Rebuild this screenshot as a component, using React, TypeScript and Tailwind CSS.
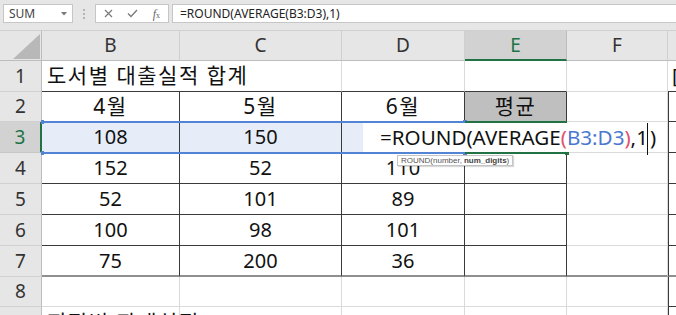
import React from "react";

const base =
  "flex items-center justify-center overflow-hidden whitespace-nowrap text-[20px] text-[#111]";

function C({ cls = "", children }: { cls?: string; children?: React.ReactNode }) {
  return <div className={`${base} ${cls}`}>{children}</div>;
}

function RH({ n, sel = false }: { n: string; sel?: boolean }) {
  return (
    <div
      className={
        sel
          ? "flex items-center justify-center bg-[#d2d2d2] text-[#217346] text-[19px] border-b border-[#c6c6c6] border-r-2 border-r-[#217346]"
          : "flex items-center justify-center bg-[#e6e6e6] text-[#333] text-[19px] border-b border-[#d0d0d0] border-r border-r-[#bdbdbd]"
      }
    >
      {n}
    </div>
  );
}

function CH({ l, sel = false }: { l: string; sel?: boolean }) {
  return (
    <div
      className={
        sel
          ? "flex items-center justify-center bg-[#d2d2d2] text-[#217346] text-[19px] border-r border-[#bdbdbd] border-b-2 border-b-[#217346] border-t border-t-[#d0d0d0]"
          : "flex items-center justify-center bg-[#e6e6e6] text-[#333] text-[19px] border-r border-[#cfcfcf] border-b border-b-[#bdbdbd] border-t border-t-[#d0d0d0]"
      }
    >
      {l}
    </div>
  );
}

const L = "border-r border-b border-[#dadada]"; // light grid
const D = "border-r border-b border-[#3a3a3a]"; // dark both
const LR_DB = "border-r border-r-[#dadada] border-b border-b-[#3a3a3a]";
const DR_GB = "border-r border-r-[#3a3a3a] border-b-2 border-b-[#8f8f8f]";
const LR_GB = "border-r border-r-[#dadada] border-b-2 border-b-[#8f8f8f]";
const KO = "font-['Noto_Sans','Noto_Sans_CJK_KR',sans-serif] tracking-[1.5px] text-[21px]";

export default function App() {
  return (
    <div className="relative w-[676px] h-[315px] overflow-hidden bg-[#e6e6e6] font-['Noto_Sans','Noto_Sans_CJK_KR',sans-serif]">
      {/* Formula bar */}
      <div className="flex h-[30px] pt-[4px] pl-[3px]">
        <div className="relative flex items-center w-[70px] h-[19px] bg-white border border-[#c6c6c6] pl-[5px] text-[12px] text-[#444]">
          SUM
          <svg className="absolute right-[5px] top-[7px]" width="6" height="4" viewBox="0 0 6 4">
            <path d="M0 0 L6 0 L3 3.5 Z" fill="#7a7a7a" />
          </svg>
        </div>
        <div className="flex w-[22px] h-[19px] items-center justify-center">
          <div className="flex flex-col gap-[2px]">
            <div className="w-[2px] h-[2px] bg-[#b5b5b5]" />
            <div className="w-[2px] h-[2px] bg-[#b5b5b5]" />
            <div className="w-[2px] h-[2px] bg-[#b5b5b5]" />
          </div>
        </div>
        <div className="flex items-center w-[74px] h-[19px] bg-white border border-[#c6c6c6] text-[#7a7a7a]">
          <div className="flex w-[25px] justify-center">
            <svg width="9" height="9" viewBox="0 0 9 9">
              <path d="M1 1 L8 8 M8 1 L1 8" stroke="#7a7a7a" strokeWidth="1.2" />
            </svg>
          </div>
          <div className="flex w-[25px] justify-center">
            <svg width="11" height="9" viewBox="0 0 11 9">
              <path d="M1 4.5 L4 7.5 L10 1" stroke="#7a7a7a" strokeWidth="1.4" fill="none" />
            </svg>
          </div>
          <div className="flex w-[24px] justify-center items-end font-['Liberation_Serif',serif] italic text-[12px] leading-none text-[#666]">
            f<span className="text-[8px] not-italic">x</span>
          </div>
        </div>
        <div className="flex items-center flex-1 ml-[3px] h-[19px] bg-white border border-[#c6c6c6] border-r-0 pl-[7px] text-[12px] text-[#222]">
          =ROUND(AVERAGE(B3:D3),1)
        </div>
      </div>

      {/* Sheet */}
      <div className="relative grid grid-cols-[42px_138px_162px_123px_102px_101px_40px] grid-rows-[31px_31px_30px_31px_31px_31px_31px_31px_30px_31px] bg-white">
        {/* header row */}
        <div className="relative bg-[#e6e6e6] border-r border-[#bdbdbd] border-b border-b-[#bdbdbd] border-t border-t-[#d0d0d0]">
          <svg className="absolute left-[13px] top-[3px]" width="27" height="25" viewBox="0 0 27 25">
            <path d="M27 0 L27 25 L0 25 Z" fill="#b8b8b8" />
          </svg>
        </div>
        <CH l="B" />
        <CH l="C" />
        <CH l="D" />
        <CH l="E" sel />
        <CH l="F" />
        <CH l="" />

        {/* row 1 */}
        <RH n="1" />
        <C cls={`border-b border-[#3a3a3a] justify-start pl-[5px] overflow-visible z-10 ${KO}`}>
          도서별 대출실적 합계
        </C>
        <C cls={LR_DB} />
        <C cls={LR_DB} />
        <C cls={LR_DB} />
        <C cls={L} />
        <C cls="border-b border-[#3a3a3a] justify-start pl-[4px] text-[#1b1b3a]">[</C>

        {/* row 2 */}
        <RH n="2" />
        <C cls={`${D} ${KO}`}>4월</C>
        <C cls={`${D} ${KO}`}>5월</C>
        <C cls={`${D} ${KO}`}>6월</C>
        <C cls={`${D} ${KO} bg-[#bfbfbf]`}>평균</C>
        <C cls={L} />
        <C cls="border-l border-b border-[#3a3a3a]" />

        {/* row 3 */}
        <RH n="3" sel />
        <C cls={`${D} bg-[#e6edf8]`}>108</C>
        <C cls={`${D} bg-[#e6edf8]`}>150</C>
        <C cls={`${D} bg-[#e6edf8]`} />
        <C cls={D} />
        <C cls={L} />
        <C cls="border-l border-b border-[#3a3a3a]" />

        {/* row 4 */}
        <RH n="4" />
        <C cls={D}>152</C>
        <C cls={D}>52</C>
        <C cls={D}>110</C>
        <C cls={D} />
        <C cls={L} />
        <C cls="border-l border-b border-[#3a3a3a]" />

        {/* row 5 */}
        <RH n="5" />
        <C cls={D}>52</C>
        <C cls={D}>101</C>
        <C cls={D}>89</C>
        <C cls={D} />
        <C cls={L} />
        <C cls="border-l border-b border-[#3a3a3a]" />

        {/* row 6 */}
        <RH n="6" />
        <C cls={D}>100</C>
        <C cls={D}>98</C>
        <C cls={D}>101</C>
        <C cls={D} />
        <C cls={L} />
        <C cls="border-l border-b border-[#3a3a3a]" />

        {/* row 7 */}
        <RH n="7" />
        <C cls={DR_GB}>75</C>
        <C cls={DR_GB}>200</C>
        <C cls={DR_GB}>36</C>
        <C cls={DR_GB} />
        <C cls={LR_GB} />
        <C cls="border-l border-l-[#3a3a3a] border-b-2 border-b-[#8f8f8f]" />

        {/* row 8 */}
        <RH n="8" />
        <C cls={L} />
        <C cls={L} />
        <C cls={L} />
        <C cls={L} />
        <C cls={L} />
        <C cls="border-l border-b border-[#3a3a3a]" />

        {/* row 9 */}
        <div className="bg-[#e6e6e6] border-r border-r-[#bdbdbd]" />
        <C cls={`${L} justify-start items-start pl-[5px] pt-0 overflow-visible z-10 ${KO}`}>
          지점별 판매실적
        </C>
        <C cls={L} />
        <C cls={L} />
        <C cls={L} />
        <C cls={L} />
        <C cls="border-l border-[#3a3a3a]" />

        {/* overlays: reference range B3:D3 */}
        <div className="absolute left-[42px] top-[91px] w-[423px] h-[2px] bg-[#5283d4]" />
        <div className="absolute left-[42px] top-[122px] w-[423px] h-[2px] bg-[#5283d4]" />
        <div className="absolute left-[463px] top-[90px] w-[4px] h-[4px] bg-[#5283d4]" />
        <div className="absolute left-[463px] top-[121px] w-[4px] h-[4px] bg-[#5283d4]" />
        <div className="absolute left-[41px] top-[90px] w-[3px] h-[4px] bg-[#5283d4]" />
        <div className="absolute left-[41px] top-[121px] w-[3px] h-[4px] bg-[#5283d4]" />
        {/* active cell E3 */}
        <div className="absolute left-[465px] top-[91px] w-[102px] h-[2px] bg-[#217346]" />
        <div className="absolute left-[465px] top-[122px] w-[102px] h-[2px] bg-[#217346]" />
        <div className="absolute left-[565px] top-[121px] w-[4px] h-[4px] bg-[#217346]" />

        {/* in-cell editor */}
        <div className="absolute left-[363px] top-[93px] w-[290px] h-[29px] bg-white flex items-center pl-[17px] text-[20.6px] text-[#111] whitespace-nowrap z-20">
          =ROUND(AVERAGE<span className="text-[#e0506e]">(</span>
          <span className="text-[#4a78cf]">B3:D3</span>
          <span className="text-[#e0506e]">)</span>,1<span className="ml-[2px]">)</span>
        </div>
        {/* text cursor */}
        <div className="absolute left-[647px] top-[93px] w-[1px] h-[32px] bg-[#111] z-40" />

        {/* tooltip */}
        <div className="absolute left-[397px] top-[125px] h-[11px] px-[3px] flex items-center bg-white border border-[#c4c4c4] shadow-[1px_1px_1px_rgba(0,0,0,0.15)] font-['Liberation_Sans',sans-serif] text-[8px] leading-none text-[#555] whitespace-nowrap z-30">
          ROUND(number, <span className="font-bold ml-[2px] text-[#444]">num_digits</span>)
        </div>
      </div>
    </div>
  );
}
